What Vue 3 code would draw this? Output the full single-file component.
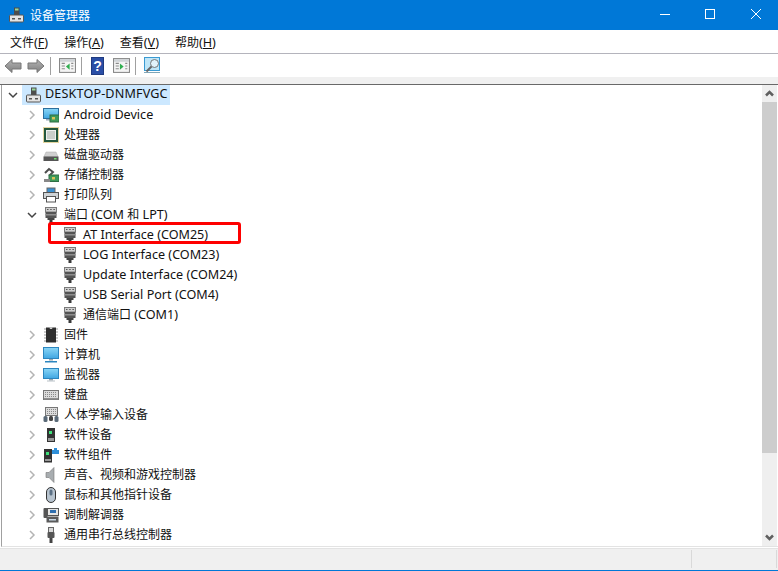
<script setup>
const parts = (s) => s.match(/[\x00-\x7f]+|[^\x00-\x7f]+/g).map((t) => ({ t, lat: /^[\x00-\x7f]/.test(t) }))
const rows = [
  { label: 'Android Device', icon: 'monitorCard' },
  { label: '处理器', icon: 'cpu' },
  { label: '磁盘驱动器', icon: 'disk' },
  { label: '存储控制器', icon: 'storage' },
  { label: '打印队列', icon: 'printer' },
  { label: '端口 (COM 和 LPT)', icon: 'port', open: true },
  { label: 'AT Interface (COM25)', icon: 'port', child: true },
  { label: 'LOG Interface (COM23)', icon: 'port', child: true },
  { label: 'Update Interface (COM24)', icon: 'port', child: true },
  { label: 'USB Serial Port (COM4)', icon: 'port', child: true },
  { label: '通信端口 (COM1)', icon: 'port', child: true },
  { label: '固件', icon: 'chip' },
  { label: '计算机', icon: 'computer' },
  { label: '监视器', icon: 'monitor' },
  { label: '键盘', icon: 'keyboard' },
  { label: '人体学输入设备', icon: 'hid' },
  { label: '软件设备', icon: 'soft' },
  { label: '软件组件', icon: 'softComp' },
  { label: '声音、视频和游戏控制器', icon: 'sound' },
  { label: '鼠标和其他指针设备', icon: 'mouse' },
  { label: '调制解调器', icon: 'modem' },
  { label: '通用串行总线控制器', icon: 'usb' },
].map((r) => ({ ...r, parts: parts(r.label) }))
const menus = [
  ['文件', 'F'],
  ['操作', 'A'],
  ['查看', 'V'],
  ['帮助', 'H'],
]
</script>

<template>
  <div class="win">
    <svg class="defs" aria-hidden="true">
      <defs>
        <linearGradient id="scr" x1="0" y1="0" x2="0" y2="1">
          <stop offset="0" stop-color="#8ad6f6" />
          <stop offset="1" stop-color="#3fa6e2" />
        </linearGradient>
        <linearGradient id="arr" x1="0" y1="0" x2="0" y2="1">
          <stop offset="0" stop-color="#b4b4b4" />
          <stop offset="1" stop-color="#7f7f7f" />
        </linearGradient>
      </defs>
      <symbol id="host" viewBox="0 0 16 16">
        <rect x="6" y="0.5" width="5.5" height="8" fill="#4d4d4d" />
        <rect x="7" y="1.5" width="3.5" height="2" fill="#9ad79a" />
        <rect x="1.5" y="8" width="14" height="7" rx="1" fill="#e4e4e4" stroke="#555" />
        <rect x="4" y="11" width="3" height="1.5" fill="#555" />
        <rect x="10" y="11" width="3" height="1.5" fill="#555" />
      </symbol>
      <symbol id="monitorCard" viewBox="0 0 16 16">
        <rect x="0.5" y="1.5" width="15" height="10" fill="url(#scr)" stroke="#2c6f9e" />
        <rect x="3" y="12" width="7" height="1.5" fill="#9ab" />
        <rect x="7" y="8" width="9" height="7" fill="#3f9a5a" stroke="#2f6e44" />
        <rect x="9" y="10" width="3" height="2.5" fill="#d9c25a" />
      </symbol>
      <symbol id="cpu" viewBox="0 0 16 16">
        <rect x="1" y="1" width="14" height="14" fill="#24573d" />
        <rect x="0.5" y="0.5" width="15" height="15" fill="none" stroke="#c9a83f" stroke-dasharray="1 1" />
        <rect x="3.5" y="3.5" width="9" height="9" fill="#c9cec9" stroke="#eef0ee" />
      </symbol>
      <symbol id="disk" viewBox="0 0 16 16">
        <path d="M3 5h10l2 4.500H1z" fill="#d0d0d0" stroke="#aaa" stroke-width="0.5" />
        <rect x="0.500" y="9.500" width="15" height="4.500" fill="#555" />
        <rect x="11" y="11" width="2.500" height="1.500" fill="#6fe06f" />
      </symbol>
      <symbol id="storage" viewBox="0 0 16 16">
        <path d="M2 6l4-4 4 3-3 3 3 2" fill="none" stroke="#4d4d4d" stroke-width="2" />
        <rect x="6" y="8" width="10" height="6.500" fill="#3f9a5a" stroke="#2f6e44" />
        <rect x="9" y="10" width="3" height="2.500" fill="#d9c25a" />
        <rect x="1" y="12" width="6" height="3" fill="#888" />
      </symbol>
      <symbol id="printer" viewBox="0 0 16 16">
        <rect x="4" y="1" width="8" height="5" fill="#3a8fd0" stroke="#666" />
        <rect x="0.500" y="5.500" width="15" height="6" fill="#cfd3d6" stroke="#555" />
        <rect x="3.500" y="9.500" width="9" height="5.500" fill="#fff" stroke="#555" />
      </symbol>
      <symbol id="port" viewBox="0 0 16 16">
        <rect x="2.500" y="0.500" width="11" height="4.500" fill="#cfcfcf" stroke="#7a7a7a" />
        <path d="M4 2.500h1.500M7.200 2.500h1.500M10.400 2.500h1.500" stroke="#555" />
        <rect x="2.500" y="5" width="11" height="6" fill="#545454" />
        <rect x="2.500" y="7" width="11" height="1.500" fill="#8f8f8f" />
        <rect x="4.500" y="11" width="7" height="2" fill="#444" />
        <rect x="6.500" y="13" width="3" height="3" fill="#3a3a3a" />
      </symbol>
      <symbol id="chip" viewBox="0 0 16 16">
        <rect x="3" y="0.500" width="10" height="15" fill="#2e2e2e" />
        <path d="M1 2h2M1 5h2M1 8h2M1 11h2M1 14h2M13 2h2M13 5h2M13 8h2M13 11h2M13 14h2" stroke="#999" />
        <path d="M6.500 0.500a1.500 1.500 0 0 0 3 0z" fill="#ddd" />
      </symbol>
      <symbol id="computer" viewBox="0 0 16 16">
        <rect x="0.500" y="0.500" width="15" height="11" fill="url(#scr)" stroke="#2c86bf" />
        <rect x="6" y="12" width="4" height="1.500" fill="#9aa5ad" />
        <rect x="2" y="14" width="12" height="1.500" fill="#2c86bf" />
      </symbol>
      <symbol id="monitor" viewBox="0 0 16 16">
        <rect x="0.500" y="1.500" width="15" height="10" fill="url(#scr)" stroke="#2c86bf" />
        <rect x="6" y="12" width="4" height="1.500" fill="#9aa5ad" />
        <rect x="4" y="13.500" width="8" height="1" fill="#b9c2c8" />
      </symbol>
      <symbol id="keyboard" viewBox="0 0 16 16">
        <rect x="0.500" y="3.500" width="15" height="9" fill="#dcdcdc" stroke="#777" />
        <path d="M2 5.500h12M2 7.500h12M2 9.500h12" stroke="#8a8a8a" stroke-dasharray="1 1" />
        <rect x="1" y="11" width="14" height="1.500" fill="#8f8f8f" />
      </symbol>
      <symbol id="hid" viewBox="0 0 16 16">
        <rect x="2.500" y="0.500" width="12" height="8" fill="#dcdcdc" stroke="#777" />
        <path d="M4 2.500h9M4 4.500h9M4 6.500h9" stroke="#8a8a8a" stroke-dasharray="1 1" />
        <rect x="0.500" y="9" width="4" height="6" rx="1.500" fill="#5a6a78" />
        <rect x="11.500" y="9" width="4" height="6" rx="1.500" fill="#5a6a78" />
        <rect x="6" y="9" width="4" height="5" rx="1.500" fill="#444" />
      </symbol>
      <symbol id="soft" viewBox="0 0 16 16">
        <rect x="4" y="1" width="8" height="14" fill="#333" />
        <rect x="6" y="4" width="3" height="3" fill="#3fe07a" />
        <rect x="5" y="11" width="6" height="3" fill="#999" />
      </symbol>
      <symbol id="softComp" viewBox="0 0 16 16">
        <rect x="1" y="2" width="8" height="13.500" fill="#333" />
        <rect x="3" y="5" width="3" height="3" fill="#3fe07a" />
        <rect x="2" y="12" width="6" height="2" fill="#999" />
        <path d="M9 3h2V1h3v2h2v4H9z" fill="#2f8fd8" />
      </symbol>
      <symbol id="sound" viewBox="0 0 16 16">
        <path d="M3 5.500h3l5-5v15l-5-5H3z" fill="#a8adb0" stroke="#777" stroke-width="0.600" />
      </symbol>
      <symbol id="mouse" viewBox="0 0 16 16">
        <rect x="3.500" y="0.500" width="9" height="15" rx="4.500" fill="#b8c4cf" stroke="#333" />
        <rect x="6.500" y="2.500" width="3" height="6" rx="1.500" fill="#5c7186" />
      </symbol>
      <symbol id="modem" viewBox="0 0 16 16">
        <rect x="0.500" y="1" width="4" height="10" rx="1" fill="#555" />
        <rect x="4.500" y="1.500" width="11" height="7" fill="#e6e6e6" stroke="#555" />
        <rect x="7" y="3" width="6" height="3" fill="#2f6fb0" />
        <rect x="3.500" y="9.500" width="12" height="6" fill="#5a5a5a" />
        <rect x="6" y="12" width="7" height="1.500" fill="#c8d8e6" />
      </symbol>
      <symbol id="usb" viewBox="0 0 16 16">
        <rect x="5.500" y="0.500" width="5" height="5" fill="#d8d8d8" stroke="#666" />
        <rect x="4.500" y="5" width="7" height="6" rx="1" fill="#555" />
        <rect x="6.500" y="11" width="3" height="5" fill="#444" />
      </symbol>
    </svg>

    <header class="titlebar">
      <svg class="ticon"><use href="#host" /></svg>
      <span class="ttext">设备管理器</span>
      <div class="wbtns">
        <svg class="wbtn" viewBox="0 0 46 30"><path d="M20 14.500h10" stroke="#fff" /></svg>
        <svg class="wbtn" viewBox="0 0 46 30"><rect x="19.500" y="9.500" width="9" height="9" fill="none" stroke="#fff" /></svg>
        <svg class="wbtn" viewBox="0 0 46 30"><path d="M19 9l10 10M29 9L19 19" stroke="#fff" /></svg>
      </div>
    </header>

    <nav class="menubar">
      <span v-for="m in menus" :key="m[0]" class="menu">{{ m[0] }}<span class="lat">(<u>{{ m[1] }}</u>)</span></span>
    </nav>

    <div class="toolbar">
      <svg class="tb tb-arrow" viewBox="0 0 18 16"><path d="M8 1.500L1 8l7 6.500V11h9V5H8z" fill="url(#arr)" stroke="#777" /></svg>
      <svg class="tb tb-arrow" viewBox="0 0 18 16"><path d="M10 1.500L17 8l-7 6.500V11H1V5h9z" fill="url(#arr)" stroke="#777" /></svg>
      <i class="sep"></i>
      <svg class="tb tb-pane" viewBox="0 0 16 16">
        <rect x="0.500" y="1.500" width="15" height="13" fill="#f4f4f4" stroke="#888" />
        <rect x="1" y="2" width="14" height="2.500" fill="#cfd3d6" />
        <path d="M2.500 6h3M2.500 8.500h3M2.500 11h3M11.500 6h2M11.500 8.500h2M11.500 11h2" stroke="#8a8a8a" />
        <path d="M10 6v6L6.500 9z" fill="#2fae4f" />
      </svg>
      <i class="sep"></i>
      <svg class="tb tb-help" viewBox="0 0 13 18">
        <rect x="0.500" y="0.500" width="12" height="17" fill="#2a4ea6" stroke="#1f3a80" />
        <text x="6.500" y="14" text-anchor="middle" font-size="14" font-weight="700" font-family="Liberation Sans, sans-serif" fill="#fff">?</text>
      </svg>
      <svg class="tb tb-pane" viewBox="0 0 16 16">
        <rect x="0.500" y="1.500" width="15" height="13" fill="#f4f4f4" stroke="#888" />
        <rect x="1" y="2" width="14" height="2.500" fill="#cfd3d6" />
        <path d="M2.500 6h3M2.500 8.500h3M2.500 11h3M11.500 6h2M11.500 8.500h2M11.500 11h2" stroke="#8a8a8a" />
        <path d="M6.500 6v6L10 9z" fill="#2fae4f" />
      </svg>
      <i class="sep"></i>
      <svg class="tb tb-scan" viewBox="0 0 16 18">
        <rect x="0.500" y="0.500" width="15" height="13" fill="#bfe6f8" stroke="#3a9ad2" />
        <rect x="0" y="15" width="16" height="1" fill="#7fa6b8" />
        <circle cx="10.500" cy="6.500" r="4" fill="#e2f3fb" stroke="#777" />
        <path d="M7.500 9.500l-5 5" stroke="#666" stroke-width="2" />
      </svg>
    </div>

    <div class="gap"></div>

    <main class="content">
      <div class="tree">
        <div class="row root">
          <svg class="chev" viewBox="0 0 10 10"><path d="M1 3l4 4 4-4" fill="none" stroke="#444" stroke-width="1.500" /></svg>
          <span class="sel">
            <svg class="ic"><use href="#host" /></svg>
            <span class="lat lbl wide">DESKTOP-DNMFVGC</span>
          </span>
        </div>
        <div v-for="r in rows" :key="r.label" class="row" :class="{ child: r.child, cat: !r.child }">
          <svg v-if="!r.child" class="chev" viewBox="0 0 10 10">
            <path v-if="r.open" d="M1 3l4 4 4-4" fill="none" stroke="#444" stroke-width="1.500" />
            <path v-else d="M3 1l4 4-4 4" fill="none" stroke="#b4b4b4" stroke-width="1.500" />
          </svg>
          <svg class="ic"><use :href="'#' + r.icon" /></svg>
          <span class="lbl"><span v-for="(p, i) in r.parts" :key="i" :class="{ lat: p.lat }">{{ p.t }}</span></span>
        </div>
        <div class="redbox"></div>
      </div>
      <div class="scrollbar">
        <svg class="arrow" viewBox="0 0 15 17"><path d="M4 10.500l3.500-3.500 3.500 3.500" fill="none" stroke="#606060" stroke-width="2.500" /></svg>
        <div class="track"><div class="thumb"></div></div>
        <svg class="arrow" viewBox="0 0 15 17"><path d="M4 6.500l3.500 3.500 3.500-3.500" fill="none" stroke="#606060" stroke-width="2.500" /></svg>
      </div>
    </main>

    <footer class="status">
      <div class="cell c1"></div>
      <div class="cell c2"></div>
      <div class="cell c3"></div>
    </footer>
  </div>
</template>

<style>
html, body { margin: 0; background: #fff; }
</style>

<style scoped>
.win {
  width: 778px;
  height: 571px;
  display: flex;
  flex-direction: column;
  overflow: hidden;
  font-family: "Noto Sans CJK SC", sans-serif;
  font-size: 12px;
  color: #111;
  background: #fff;
}
.lat { font-family: "Noto Sans", sans-serif; font-size: 12.6px; }
.wide { letter-spacing: 0.15px; }
.defs { position: absolute; width: 0; height: 0; }
.titlebar {
  height: 30px;
  flex: none;
  background: #0078d7;
  display: flex;
  align-items: center;
  padding-left: 8px;
  color: #fff;
}
.ticon { width: 16px; height: 16px; margin-right: 6px; }
.ttext { font-size: 12px; margin-bottom: 2px; }
.wbtns { margin-left: auto; display: flex; }
.wbtn { width: 46px; height: 30px; display: block; }
.menubar {
  height: 23px;
  flex: none;
  display: flex;
  align-items: center;
  padding-left: 10px;
  gap: 16px;
  border-bottom: 1px solid #b4b4bc;
}
.menu { white-space: nowrap; }
.toolbar {
  height: 23px;
  flex: none;
  display: flex;
  align-items: center;
  padding-left: 4px;
}
.tb { display: block; flex: none; }
.tb-arrow { width: 18px; height: 16px; margin-right: 5px; }
.tb-pane { width: 17px; height: 17px; margin: 0 5px 0 8px; }
.tb-help { width: 13px; height: 18px; margin: 0 1px 0 9px; }
.tb-scan { width: 16px; height: 18px; margin-left: 8px; }
.sep { width: 1px; height: 18px; background: #a0a0a0; flex: none; }
.gap {
  height: 7px;
  flex: none;
  background: #f0f0f0;
  border-bottom: 1px solid #696969;
}
.content {
  flex: none;
  height: 461px;
  display: flex;
  border-left: 1px solid #a0a0a0;
  margin-left: 1px;
  border-bottom: 1px solid #e3e3e3;
}
.tree { flex: 1; position: relative; min-width: 0; overflow: hidden; }
.row {
  height: 20px;
  display: flex;
  align-items: center;
  white-space: nowrap;
  line-height: 20px;
}
.root { padding-left: 6px; }
.cat { padding-left: 25px; }
.child { padding-left: 60px; }
.chev { width: 10px; height: 10px; flex: none; }
.cat .chev { margin-right: 6px; }
.root .chev { margin-right: 4px; }
.ic { width: 16px; height: 16px; flex: none; margin-right: 5px; }
.lbl { margin-bottom: 2px; }
.sel {
  background: #cce8ff;
  display: flex;
  align-items: center;
  height: 20px;
  padding-left: 3px;
  padding-right: 2px;
}
.sel .ic { margin-right: 4px; }
.redbox {
  position: absolute;
  left: 46px;
  top: 137px;
  width: 187px;
  height: 16px;
  border: 3px solid #fe0000;
  border-radius: 3px;
}
.scrollbar {
  width: 15px;
  margin-right: 1px;
  flex: none;
  background: #efefef;
  display: flex;
  flex-direction: column;
}
.arrow { width: 15px; height: 17px; flex: none; display: block; }
.track { flex: 1; display: flex; flex-direction: column; }
.thumb { height: 351px; background: #cdcdcd; }
.status {
  flex: none;
  height: 23px;
  margin-top: 1px;
  border-top: 1px solid #e3e3e3;
  display: flex;
  background: #f0f0f0;
  border-bottom: 1px solid #0078d7;
  box-sizing: border-box;
  padding: 1px 1px 2px 0;
}
.cell { border-right: 1px solid #d9d9d9; }
.c1 { width: 691px; }
.c2 { width: 84px; }
.c3 { flex: 1; border: 0; }
</style>
